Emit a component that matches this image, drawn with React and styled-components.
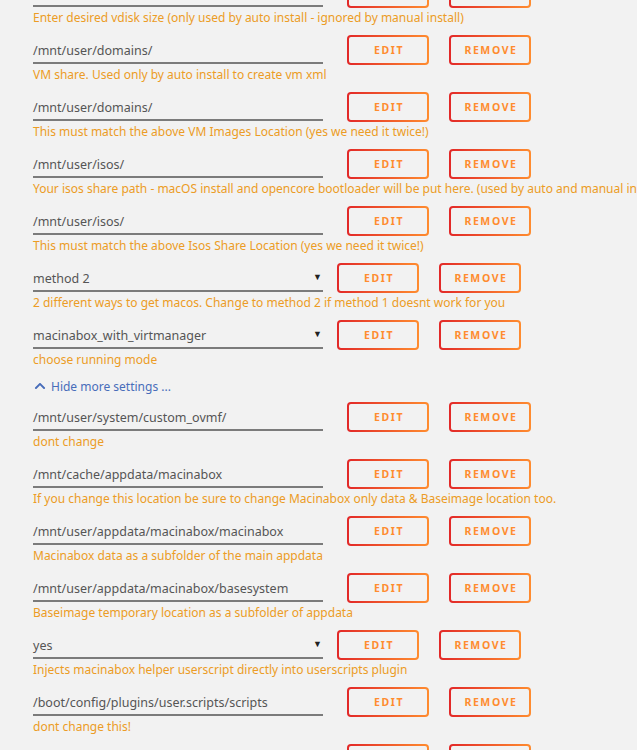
import styled, { createGlobalStyle } from 'styled-components';
import { FaChevronUp } from 'react-icons/fa';

const GlobalStyle = createGlobalStyle`
    html, body{
        margin: 0;
        padding: 0;
        background-color: #f2f2f2;
        overflow: hidden;
    }
    body{
        font-family: "Noto Sans", "Open Sans", sans-serif;
        font-size: 12px;
        color: #555;
    }
`

const Page = styled.div`
    height: 750px;
    overflow: hidden;
    padding-left: 33px;
`

const List = styled.div`
    margin-top: -22px;
`

const Setting = styled.div`
    margin-bottom: 8px;
`

const Row = styled.div`
    display: flex;
    align-items: flex-end;
    height: 30px;
`

const Field = styled.div`
    position: relative;
    width: 290px;
    height: 29px;
    box-sizing: border-box;
    border-bottom: 2px solid #7b7b7b;
    margin-right: ${props => props.select ? '14px' : '24px'};
    margin-bottom: 1px;
    display: flex;
    align-items: flex-end;
    padding-bottom: 3px;
    font-size: 12.5px;
    color: #555;
    white-space: nowrap;
`

const Arrow = styled.span`
    position: absolute;
    right: 1px;
    bottom: 7px;
    font-size: 9px;
    color: #222;
`

const Button = styled.button`
    width: 82px;
    height: 30px;
    box-sizing: border-box;
    margin-right: 20px;
    border: 2px solid transparent;
    border-radius: 4px;
    background:
        linear-gradient(#f2f2f2, #f2f2f2) padding-box,
        linear-gradient(90deg, #e22828 0%, #ff8c2f 100%) border-box;
    color: #ff8c2f;
    font-family: "Noto Sans", "Open Sans", sans-serif;
    font-size: 10.5px;
    font-weight: bold;
    letter-spacing: 1.6px;
    text-transform: uppercase;
    padding: 0 0 0 2px;
    cursor: pointer;
`

const Desc = styled.div`
    height: 19px;
    padding-top: 1px;
    line-height: 18px;
    box-sizing: border-box;
    color: #ec9c25;
    white-space: nowrap;
`

const Toggle = styled.div`
    display: flex;
    align-items: center;
    gap: 5px;
    height: 18px;
    margin: 0 0 7px 1px;
    color: #486dba;
    svg{
        font-size: 12px;
    }
`

const SettingItem = ({ value, desc, select }) => (
    <Setting>
        <Row>
            <Field select={select}>
                {value}
                {select && <Arrow>▼</Arrow>}
            </Field>
            <Button>Edit</Button>
            <Button>Remove</Button>
        </Row>
        <Desc>{desc}</Desc>
    </Setting>
)

const basic = [
    { value: '100G', desc: 'Enter desired vdisk size (only used by auto install - ignored by manual install)' },
    { value: '/mnt/user/domains/', desc: 'VM share. Used only by auto install to create vm xml' },
    { value: '/mnt/user/domains/', desc: 'This must match the above VM Images Location (yes we need it twice!)' },
    { value: '/mnt/user/isos/', desc: 'Your isos share path - macOS install and opencore bootloader will be put here. (used by auto and manual install)' },
    { value: '/mnt/user/isos/', desc: 'This must match the above Isos Share Location (yes we need it twice!)' },
    { value: 'method 2', desc: '2 different ways to get macos. Change to method 2 if method 1 doesnt work for you', select: true },
    { value: 'macinabox_with_virtmanager', desc: 'choose running mode', select: true },
]

const advanced = [
    { value: '/mnt/user/system/custom_ovmf/', desc: 'dont change' },
    { value: '/mnt/cache/appdata/macinabox', desc: 'If you change this location be sure to change Macinabox only data & Baseimage location too.' },
    { value: '/mnt/user/appdata/macinabox/macinabox', desc: 'Macinabox data as a subfolder of the main appdata' },
    { value: '/mnt/user/appdata/macinabox/basesystem', desc: 'Baseimage temporary location as a subfolder of appdata' },
    { value: 'yes', desc: 'Injects macinabox helper userscript directly into userscripts plugin', select: true },
    { value: '/boot/config/plugins/user.scripts/scripts', desc: 'dont change this!' },
    { value: '/mnt/user/appdata/macinabox/logs', desc: 'log location' },
]

export default function App(){
    return(
        <Page>
            <GlobalStyle />
            <List>
                {basic.map((s, i) => <SettingItem key={'b'+i} {...s} />)}
                <Toggle>
                    <FaChevronUp />
                    <span>Hide more settings ...</span>
                </Toggle>
                {advanced.map((s, i) => <SettingItem key={'a'+i} {...s} />)}
            </List>
        </Page>
    )
}
